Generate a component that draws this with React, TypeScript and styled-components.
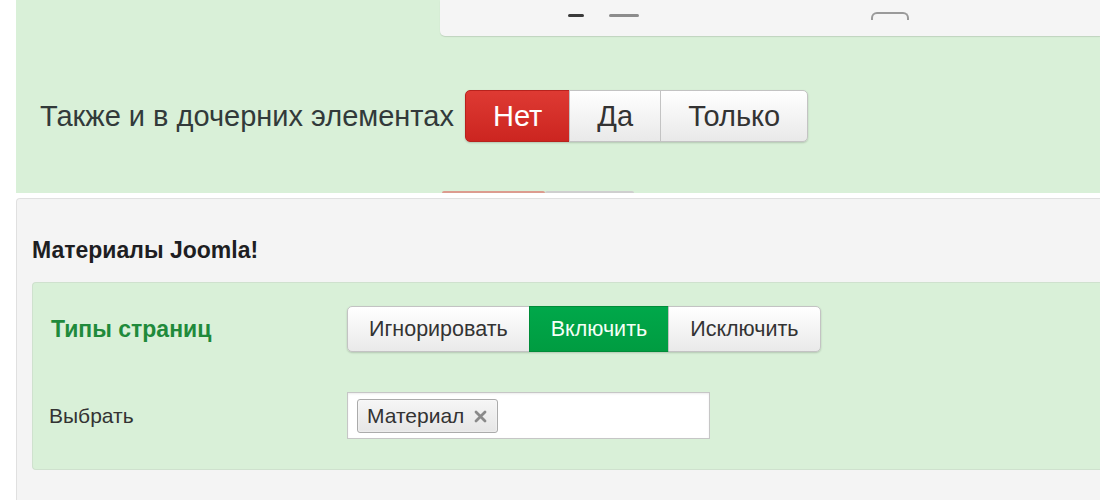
import React from 'react'
import styled, { createGlobalStyle, css } from 'styled-components'

const GlobalStyle = createGlobalStyle`
  html, body {
    margin: 0;
    padding: 0;
    background: #fff;
    overflow: hidden;
  }

  body {
    font-family: "Liberation Sans", Arial, sans-serif;
    color: #333;
  }
`

type Tone = 'danger' | 'success' | undefined

type Option = {
  label: string
  tone?: Tone
}

const childOptions: Option[] = [{ label: 'Нет', tone: 'danger' }, { label: 'Да' }, { label: 'Только' }]

const pageTypeOptions: Option[] = [
  { label: 'Игнорировать' },
  { label: 'Включить', tone: 'success' },
  { label: 'Исключить' },
]

const Segmented = ({ options, size }: { options: Option[]; size: 'lg' | 'md' }) => (
  <Group>
    {options.map((o) => (
      <SegButton key={o.label} $tone={o.tone} $size={size}>
        {o.label}
      </SegButton>
    ))}
  </Group>
)

// bold grey cross used by the chosen-style tag
const RemoveIcon = () => (
  <svg width="13" height="13" viewBox="0 0 13 13">
    <path d="M2 2 L11 11 M11 2 L2 11" stroke="#8a8a8a" strokeWidth="2.8" strokeLinecap="round" />
  </svg>
)

const App = () => {
  return (
    <Page>
      <GlobalStyle />
      <TopPanel>
        <TopStrip>
          <Mark $w={16} $c="#3a3a3a" />
          <Mark $w={30} $c="#8c8c8c" />
          <Arc />
        </TopStrip>
        <OptionRow>
          <BigLabel>Также и в дочерних элементах</BigLabel>
          <Segmented options={childOptions} size="lg" />
        </OptionRow>
        <Peek>
          <PeekPart $c="#dc9c8f" $w={103} />
          <PeekPart $c="#cfcfcf" $w={89} />
        </Peek>
      </TopPanel>

      <Panel>
        <PanelTitle>Материалы Joomla!</PanelTitle>
        <Fieldset>
          <FieldRow>
            <GroupLabel>Типы страниц</GroupLabel>
            <Segmented options={pageTypeOptions} size="md" />
          </FieldRow>
          <FieldRow>
            <FieldLabel>Выбрать</FieldLabel>
            <TagInput>
              <Tag>
                Материал
                <RemoveIcon />
              </Tag>
            </TagInput>
          </FieldRow>
        </Fieldset>
      </Panel>
    </Page>
  )
}

const Page = styled.div`
  width: 1100px;
  height: 500px;
  overflow: hidden;
  display: flex;
  flex-direction: column;
  gap: 5px;
`

const TopPanel = styled.div`
  margin-left: 16px;
  height: 193px;
  flex-shrink: 0;
  background: #d9f0d8;
  display: flex;
  flex-direction: column;
`

const TopStrip = styled.div`
  margin-left: 424px;
  height: 36px;
  background: #f5f5f5;
  border-bottom-left-radius: 5px;
  box-shadow: 0 1px 1px rgba(0, 0, 0, 0.12);
  display: flex;
  align-items: flex-start;
  padding: 14px 0 0 128px;
  box-sizing: border-box;
  gap: 25px;
`

const Mark = styled.span<{ $w: number; $c: string }>`
  width: ${(p) => p.$w}px;
  height: 3px;
  border-radius: 2px;
  background: ${(p) => p.$c};
`

const Arc = styled.span`
  margin-left: 207px;
  margin-top: -2px;
  width: 34px;
  height: 6px;
  border: 2px solid #9a9a9a;
  border-bottom: none;
  border-radius: 6px 6px 0 0;
`

const OptionRow = styled.div`
  display: flex;
  align-items: center;
  gap: 11px;
  margin-top: 54px;
  padding-left: 24px;
`

const BigLabel = styled.div`
  font-size: 29px;
  color: #323a3a;
`

const Peek = styled.div`
  margin-top: auto;
  margin-left: 426px;
  display: flex;
`

const PeekPart = styled.span<{ $c: string; $w: number }>`
  width: ${(p) => p.$w}px;
  height: 2px;
  background: ${(p) => p.$c};
  border-radius: 2px 2px 0 0;
`

const Group = styled.div`
  display: flex;
  border-radius: 5px;
  box-shadow: 0 1px 2px rgba(0, 0, 0, 0.18);
`

const toneStyles = {
  danger: css`
    background: linear-gradient(#de3a33, #cc2520);
    border-color: #b8221d;
    color: #fff;
  `,
  success: css`
    background: linear-gradient(#00a84a, #009c41);
    border-color: #008c39;
    color: #f4fff6;
  `,
}

const SegButton = styled.button<{ $tone?: Tone; $size: 'lg' | 'md' }>`
  font-family: "Liberation Sans", Arial, sans-serif;
  border: 1px solid #c3c3c3;
  background: linear-gradient(#ffffff, #e9e9e9);
  color: #333;
  cursor: pointer;
  margin: 0;
  margin-left: -1px;
  white-space: nowrap;

  ${(p) =>
    p.$size === 'lg'
      ? css`
          height: 52px;
          font-size: 29px;
          padding: 0 27px;
        `
      : css`
          height: 46px;
          font-size: 21.5px;
          padding: 0 21px;
        `}

  &:first-child {
    margin-left: 0;
    border-radius: 5px 0 0 5px;
  }

  &:last-child {
    border-radius: 0 5px 5px 0;
  }

  ${(p) => p.$tone && toneStyles[p.$tone]}
`

const Panel = styled.div`
  margin-left: 16px;
  flex: 1;
  background: #f4f4f4;
  border-top: 1px solid #e0e0e0;
  border-left: 1px solid #e0e0e0;
  border-top-left-radius: 4px;
  padding: 38px 0 0 15px;
`

const PanelTitle = styled.div`
  font-size: 23px;
  font-weight: bold;
  line-height: 26px;
  color: #1e1e22;
  margin-bottom: 19px;
`

const Fieldset = styled.div`
  background: #d9f0d8;
  border: 1px solid #cfe1ce;
  border-right: none;
  border-radius: 4px 0 0 4px;
  padding: 23px 0 30px 0;
  display: flex;
  flex-direction: column;
  gap: 40px;
`

const FieldRow = styled.div`
  display: grid;
  grid-template-columns: 298px auto;
  justify-content: start;
  align-items: center;
  padding-left: 16px;
`

const GroupLabel = styled.div`
  font-size: 23px;
  font-weight: bold;
  color: #1f8a3b;
  padding-left: 2px;
`

const FieldLabel = styled.div`
  font-size: 21px;
  color: #333;
`

const TagInput = styled.div`
  width: 363px;
  height: 47px;
  box-sizing: border-box;
  background: #fff;
  border: 1px solid #c6c6c6;
  box-shadow: inset 0 1px 2px rgba(0, 0, 0, 0.08);
  padding: 6px 9px;
  display: flex;
  align-items: flex-start;
`

const Tag = styled.span`
  height: 34px;
  box-sizing: border-box;
  display: inline-flex;
  align-items: center;
  gap: 10px;
  padding: 0 10px 0 9px;
  font-size: 21px;
  color: #333;
  background: linear-gradient(#f6f6f6, #e6e6e6);
  border: 1px solid #ababab;
  border-radius: 3px;
  box-shadow: inset 0 0 2px #fff;
`

export default App
